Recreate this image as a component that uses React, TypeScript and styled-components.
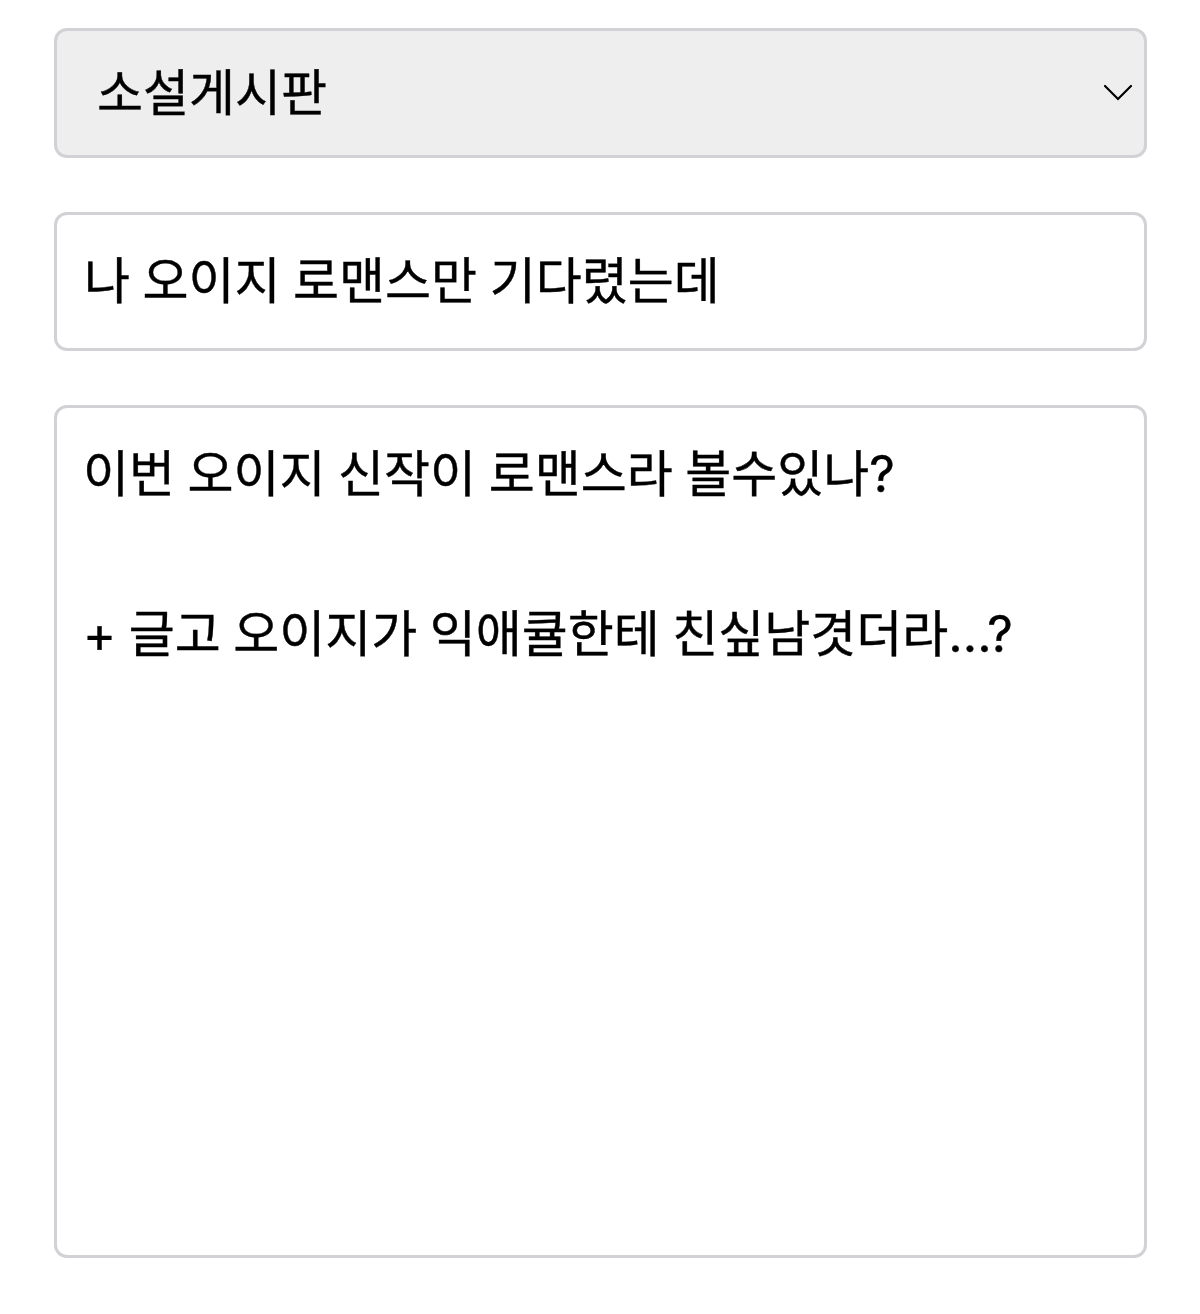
import React, {useState} from 'react';
import styled, {createGlobalStyle, css} from "styled-components";

const boards = ['소설게시판'];

export default function App() {
    const [title, setTitle] = useState('나 오이지 로맨스만 기다렸는데');
    const [content, setContent] = useState(
        '이번 오이지 신작이 로맨스라 볼수있나?\n\n+ 글고 오이지가 익애큘한테 친싶남겻더라...?'
    );

    return (
        <>
            <GlobalStyle/>
            <WriteForm>
                <SelectWrapper>
                    <BoardSelect>
                        {boards.map(board => <option key={board}>{board}</option>)}
                    </BoardSelect>
                    <SelectArrow viewBox="0 0 30 18">
                        <path d="M2 2 L15 15 L28 2"/>
                    </SelectArrow>
                </SelectWrapper>
                <TitleInput value={title} onChange={e => setTitle(e.target.value)}/>
                <ContentArea value={content} onChange={e => setContent(e.target.value)}/>
            </WriteForm>
        </>
    );
}

const GlobalStyle = createGlobalStyle`
  * {
    box-sizing: border-box;
  }
  body {
    margin: 0;
    background: #fff;
  }
`
const field = css`
  display: block;
  width: 100%;
  margin: 0;
  border: 3px solid #d1d1d6;
  border-radius: 13px;
  outline: none;
  color: #000;
  font: 400 50px Inter, "Noto Sans CJK KR", sans-serif;
  letter-spacing: 0;
  word-spacing: -1.5px;
  -webkit-text-stroke: 0.4px #000;
`
const WriteForm = styled.form`
  display: flex;
  flex-direction: column;
  gap: 54px;
  padding: 28px 53px 0 54px;
`
const SelectWrapper = styled.div`
  position: relative;
`
const BoardSelect = styled.select`
  ${field};
  height: 130px;
  padding: 0 40px;
  background: #eee;
  appearance: none;
`
const SelectArrow = styled.svg`
  position: absolute;
  top: 56px;
  right: 14px;
  width: 30px;
  height: 18px;
  fill: none;
  stroke: #000;
  stroke-width: 2.2;
  stroke-linecap: round;
  pointer-events: none;
`
const TitleInput = styled.input`
  ${field};
  height: 139px;
  padding: 0 27px 9px;
`
const ContentArea = styled.textarea`
  ${field};
  height: 853px;
  padding: 26px 26px 0;
  line-height: 80px;
  resize: none;
`
